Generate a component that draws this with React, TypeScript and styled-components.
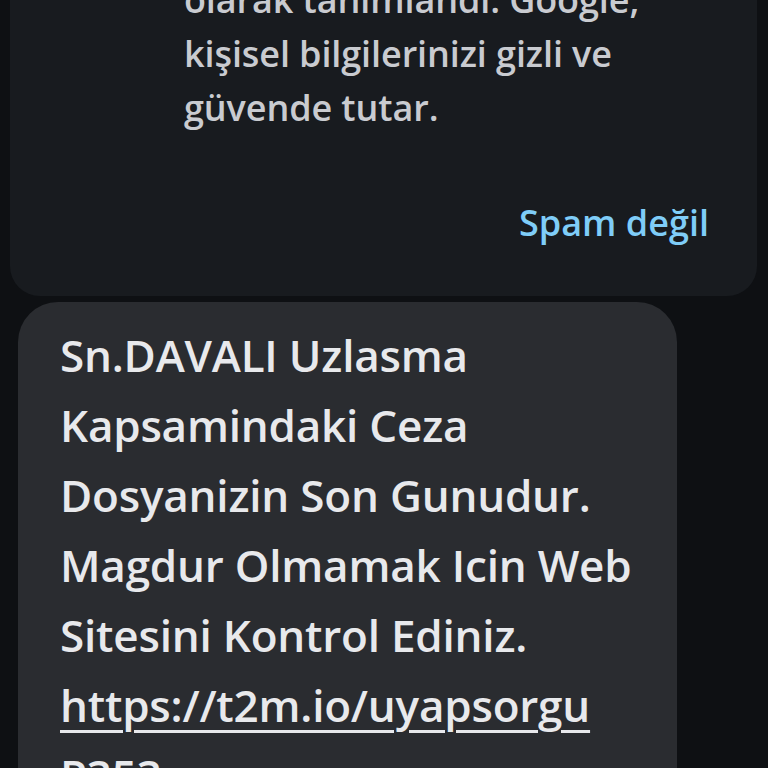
import React from 'react';
import styled, { createGlobalStyle } from 'styled-components';

const GlobalStyle = createGlobalStyle`
  html, body {
    margin: 0;
    padding: 0;
    background: #0e1013;
  }
  body {
    font-family: "Open Sans", Roboto, "Liberation Sans", sans-serif;
    -webkit-font-smoothing: antialiased;
  }
`;

const Screen = styled.div`
  width: 768px;
  height: 768px;
  overflow: hidden;
  background: #0e1013;
`;

const Thread = styled.div`
  display: flex;
  flex-direction: column;
  gap: 6px;
  margin-top: -81px;
`;

const SpamCard = styled.div`
  margin: 0 11px 0 10px;
  background: #181b1f;
  border-radius: 30px;
  padding: 0 48px 49px 174px;
  display: flex;
  flex-direction: column;
`;

const Notice = styled.p`
  margin: 0;
  color: #c9cbd0;
  font-size: 36px;
  font-weight: 600;
  line-height: 54px;
  letter-spacing: -0.1px;
`;

const Line = styled.span`
  display: block;
  white-space: nowrap;
`;

const ActionRow = styled.div`
  display: flex;
  justify-content: flex-end;
  margin-top: 64px;
`;

const TextButton = styled.button`
  background: none;
  border: none;
  padding: 0;
  font-family: inherit;
  color: #7fcdf8;
  font-size: 36px;
  font-weight: 600;
  line-height: 48px;
  letter-spacing: 0;
  cursor: pointer;
`;

const Bubble = styled.div`
  margin-left: 18px;
  width: 659px;
  box-sizing: border-box;
  background: #2a2c30;
  border-radius: 40px;
  padding: 18px 30px 40px 42px;
`;

const MessageText = styled.p`
  margin: 0;
  color: #e8e9ec;
  font-size: 44px;
  font-weight: 600;
  line-height: 70px;
  letter-spacing: -0.2px;
`;

const Link = styled.a`
  color: inherit;
  text-decoration: underline;
  text-decoration-thickness: 3px;
  text-underline-offset: 8px;
`;

export default function App() {
  return (
    <Screen>
      <GlobalStyle />
      <Thread>
        <SpamCard>
          <Notice>
            <Line>Bu gönderen, spam</Line>
            <Line>olarak tanımlandı. Google,</Line>
            <Line>kişisel bilgilerinizi gizli ve</Line>
            <Line>güvende tutar.</Line>
          </Notice>
          <ActionRow>
            <TextButton>Spam değil</TextButton>
          </ActionRow>
        </SpamCard>
        <Bubble>
          <MessageText>
            <Line>Sn.DAVALI Uzlasma</Line>
            <Line>Kapsamindaki Ceza</Line>
            <Line>Dosyanizin Son Gunudur.</Line>
            <Line>Magdur Olmamak Icin Web</Line>
            <Line>Sitesini Kontrol Ediniz.</Line>
            <Line><Link href="#">https://t2m.io/uyapsorgu</Link></Line>
            <Line><Link href="#">P353</Link></Line>
          </MessageText>
        </Bubble>
      </Thread>
    </Screen>
  );
}
